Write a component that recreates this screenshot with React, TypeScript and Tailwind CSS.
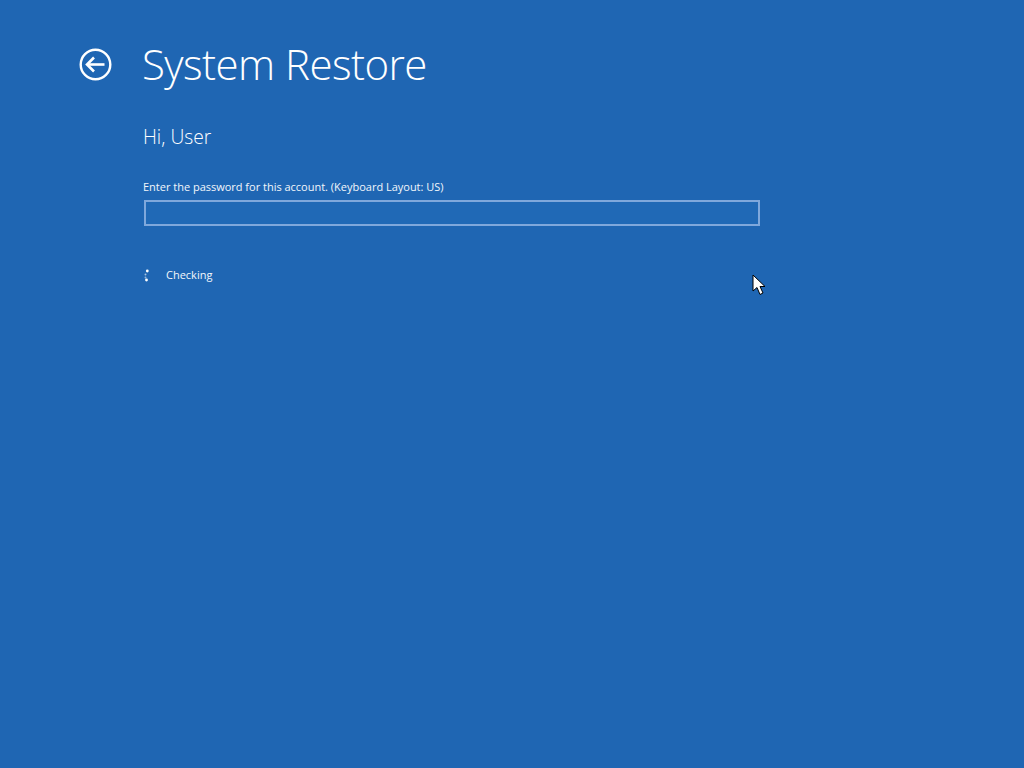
import React from "react";

const App: React.FC = () => {
  return (
    <div className="relative w-[1024px] h-[768px] overflow-hidden bg-[#1f66b3] text-white font-['Open_Sans',sans-serif]">
      <header className="flex items-center pt-[40px] pl-[79px] h-[89px]">
        <svg width="33" height="33" viewBox="0 0 33 33" fill="none" stroke="white" className="shrink-0">
          <circle cx="16.5" cy="16.5" r="14.8" strokeWidth="2.4" />
          <path d="M8 16.5H25.5" strokeWidth="2.6" />
          <path d="M15 9.5L8 16.5L15 23.5" strokeWidth="2.6" />
        </svg>
        <h1 className="ml-[30px] pb-[2px] text-[42px] leading-[50px] font-light tracking-[-0.55px] whitespace-nowrap">System Restore</h1>
      </header>

      <main className="pl-[143px]">
        <h2 className="mt-[34px] text-[19.3px] leading-[28px] font-light">Hi, User</h2>
        <label className="block mt-[28px] text-[11px] leading-[16px] tracking-[-0.01px] text-[#f2f6fb]">
          Enter the password for this account. (Keyboard Layout: US)
        </label>
        <div className="mt-[5px] ml-[1px] w-[616px] h-[26px] border-2 border-[#7fa8dc] bg-[#2069b6]" />
        <div className="flex items-center mt-[41px] h-[18px]">
          <svg width="10" height="14" viewBox="0 0 10 14" fill="white" className="shrink-0">
            <circle cx="4.3" cy="2" r="1.4" />
            <circle cx="2.5" cy="5.5" r="1" opacity="0.6" />
            <circle cx="2.5" cy="8.5" r="1" opacity="0.5" />
            <circle cx="3.5" cy="11" r="1.4" />
          </svg>
          <span className="ml-[13px] pb-[2px] text-[11px] leading-[16px] text-[#f2f6fb]">Checking</span>
        </div>
      </main>

      {/* mouse pointer */}
      <svg width="14" height="23" viewBox="0 0 14 23" className="absolute left-[752px] top-[274px]">
        <path d="M1 1V17L5 13.5L8 20.5L11 19L8 12.5H13Z" fill="white" stroke="black" strokeWidth="1" />
      </svg>
    </div>
  );
};

export default App;
